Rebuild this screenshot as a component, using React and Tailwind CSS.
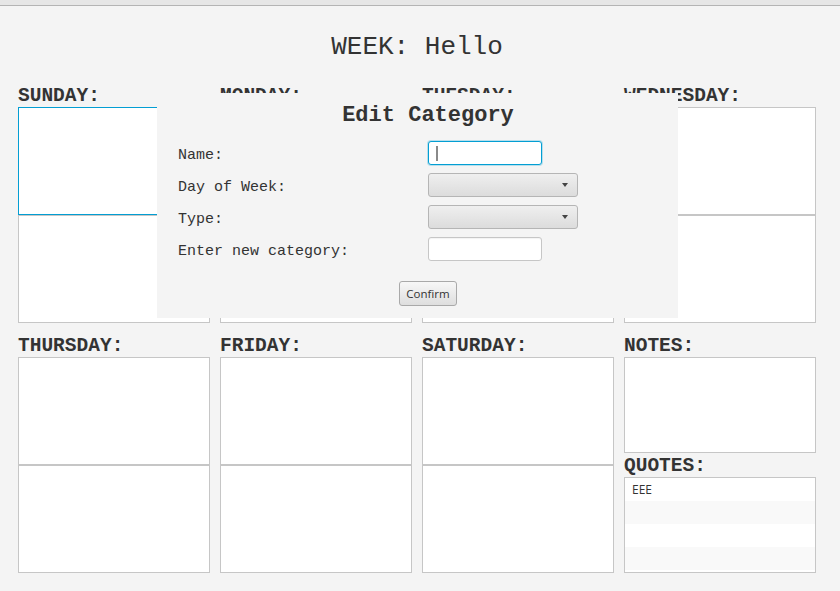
import React from 'react';

const mono = "font-['Liberation_Mono','Courier_New',monospace]";
const ui = "font-['Open_Sans','Noto_Sans',sans-serif]";

function DayColumn({ name, focused }) {
    return (
        <div className="flex flex-col">
            <div className="h-[22px] leading-[22px] text-[19.5px] font-bold whitespace-nowrap">{name}:</div>
            <div className={`h-[108px] bg-white border ${focused ? 'border-[#039ed3]' : 'border-[#c6c6c6]'}`}></div>
            <div className="h-[108px] bg-white border border-[#c6c6c6]"></div>
        </div>
    );
}

function NotesColumn() {
    // quote rows alternate white / very light grey like a list view
    const rows = ['EEE', '', '', '', ''];
    return (
        <div className="flex flex-col">
            <div className="h-[22px] leading-[22px] text-[19.5px] font-bold">NOTES:</div>
            <div className="h-[96px] bg-white border border-[#c6c6c6]"></div>
            <div className="h-[24px] pt-[2px] leading-[22px] text-[19.5px] font-bold">QUOTES:</div>
            <div className="h-[96px] bg-white border border-[#c6c6c6] overflow-hidden">
                {rows.map((q, i) => (
                    <div
                        key={i}
                        className={`h-[23px] shrink-0 pl-[7px] leading-[23px] text-[12px] text-[#333] ${ui} ${i % 2 ? 'bg-[#f9f9f9]' : 'bg-white'}`}
                    >
                        {q}
                    </div>
                ))}
            </div>
        </div>
    );
}

function ComboBox() {
    return (
        <div className="w-[150px] h-[24px] rounded-[3px] border border-[#b5b5b5] bg-gradient-to-b from-[#efefef] to-[#dcdcdc] flex items-center justify-end pr-[9px]">
            <svg width="6" height="4" viewBox="0 0 6 4">
                <path d="M0 0 L6 0 L3 4 Z" fill="#444" />
            </svg>
        </div>
    );
}

function NameField() {
    return (
        <div className="relative w-[114px] h-[24px] rounded-[3px] bg-white border border-[#039ed3] shadow-[0_0_0_1px_rgba(3,158,211,0.25)]">
            <div className="absolute left-[7px] top-[4px] w-[2px] h-[15px] bg-[#8a8a8a]"></div>
        </div>
    );
}

function TextField() {
    return <div className="w-[114px] h-[24px] rounded-[3px] bg-white border border-[#c6c6c6] shadow-[inset_0_1px_1px_rgba(0,0,0,0.05)]"></div>;
}

function EditCategoryDialog() {
    const rows = [
        ['Name:', <NameField />],
        ['Day of Week:', <ComboBox />],
        ['Type:', <ComboBox />],
        ['Enter new category:', <TextField />],
    ];
    return (
        <div className="absolute left-[157px] top-[93px] w-[521px] h-[225px] bg-[#f4f4f4]">
            <div className="pt-[10px] pl-[21px] h-[36px] leading-[26px] text-[22px] font-bold text-center text-[#333]">
                Edit Category
            </div>
            <div className="pt-[12px] pl-[21px] flex flex-col gap-[8px]">
                {rows.map(([label, control]) => (
                    <div key={label} className="flex h-[24px]">
                        <div className="w-[250px] pt-[3px] leading-[24px] text-[15px] text-[#333] whitespace-nowrap">{label}</div>
                        {control}
                    </div>
                ))}
            </div>
            <div className="mt-[20px] pl-[21px] flex justify-center">
                <button className={`w-[58px] h-[25px] rounded-[3px] border border-[#a9a9a9] bg-gradient-to-b from-[#f7f7f7] to-[#dedede] text-[11.5px] text-[#333] ${ui}`}>
                    Confirm
                </button>
            </div>
        </div>
    );
}

export default function App() {
    return (
        <div className={`relative w-[840px] h-[591px] overflow-hidden bg-[#f4f4f4] text-[#333] ${mono}`}>
            <div className="h-[6px] bg-[#e6e6e6] border-b border-[#b4b4b4]"></div>
            <div className="mt-[26px] h-[30px] leading-[30px] text-[26px] text-center pr-[6px]">WEEK: Hello</div>
            <div className="mt-[23px] ml-[18px] grid grid-cols-[repeat(4,192px)] gap-x-[10px] gap-y-[12px]">
                <DayColumn name="SUNDAY" focused />
                <DayColumn name="MONDAY" />
                <DayColumn name="TUESDAY" />
                <DayColumn name="WEDNESDAY" />
                <DayColumn name="THURSDAY" />
                <DayColumn name="FRIDAY" />
                <DayColumn name="SATURDAY" />
                <NotesColumn />
            </div>
            <EditCategoryDialog />
        </div>
    );
}
